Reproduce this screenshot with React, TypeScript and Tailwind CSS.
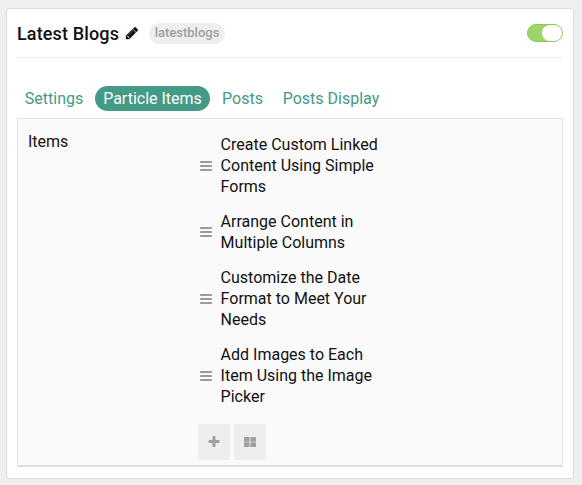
const items = [
  'Create Custom Linked Content Using Simple Forms',
  'Arrange Content in Multiple Columns',
  'Customize the Date Format to Meet Your Needs',
  'Add Images to Each Item Using the Image Picker',
];

const tabs = [
  { label: 'Settings', style: 'w-[78px] pr-1 text-[#439a86]' },
  { label: 'Particle Items', style: 'w-[115px] bg-[#439a86] text-white' },
  { label: 'Posts', style: 'w-[65px] text-[#439a86]' },
  { label: 'Posts Display', style: 'w-[112px] text-[#439a86]' },
];

function Pencil() {
  return (
    <svg viewBox="0 0 1792 1792" className="ml-[6px] size-[14px] fill-current stroke-current stroke-[50]">
      <path d="M491 1536l91-91-235-235-91 91v107h128v128h107zm523-928q0-22-22-22-10 0-17 7l-542 542q-7 7-7 17 0 22 22 22 10 0 17-7l542-542q7-7 7-17zm-54-192l416 416-832 832h-416v-416zm683 96q0 53-37 90l-166 166-416-416 166-165q36-38 90-38 53 0 91 38l235 234q37 39 37 91z" />
    </svg>
  );
}

function Bars() {
  return (
    <svg viewBox="0 0 12 10" className="h-[10px] w-3 shrink-0 fill-[#9b9b9b]">
      <rect width="12" height="2" rx="0.4" />
      <rect y="4" width="12" height="2" rx="0.4" />
      <rect y="8" width="12" height="2" rx="0.4" />
    </svg>
  );
}

export default function App() {
  return (
    <div className="h-[485px] w-[582px] bg-[#efefef] pt-2 pl-[6px] font-[Roboto,sans-serif] text-base text-[#111]">
      <div className="h-[471px] w-[568px] rounded-[3px] border border-[#dddddd] bg-white px-[10px]">
        <header className="flex h-[49px] items-center border-b border-[#ededed]">
          <h1 className="w-[102px] text-[18px] font-medium tracking-[0.14px] whitespace-nowrap">Latest Blogs</h1>
          <Pencil />
          <span className="ml-[10px] flex h-[21px] w-[76px] items-center justify-center rounded-full bg-[#eeeeee] text-[13px] font-medium text-[#a0a0a0]">
            latestblogs
          </span>
          <span className="ml-auto flex h-[18px] w-9 justify-end rounded-full border border-[#8fc65a] bg-[#9fd46a]">
            <span className="h-4 w-5 rounded-full bg-white" />
          </span>
        </header>
        <nav className="mt-7 flex h-[25px]">
          {tabs.map((tab) => (
            <button key={tab.label} className={'flex h-[25px] items-center justify-center rounded-full whitespace-nowrap ' + tab.style}>
              {tab.label}
            </button>
          ))}
        </nav>
        <section className="mt-[7px] flex h-[349px] border border-b-2 border-[#e2e2e2] border-b-[#dddddd] bg-[#fafafa]">
          <div className="w-[180px] pt-[11px] pl-[10px] leading-6">Items</div>
          <div>
            <ul className="flex w-[185px] flex-col gap-[14px] pt-[15px] leading-[21px]">
              {items.map((item) => (
                <li key={item} className="flex items-center gap-[8.6px] pl-[2px]">
                  <Bars />
                  <span className="w-[162px]">{item}</span>
                </li>
              ))}
            </ul>
            <div className="mt-[17px] flex gap-1 text-[#a0a0a0]">
              <button className="flex h-9 w-8 items-center justify-center rounded-[2px] bg-[#eeeeee]">
                <svg viewBox="0 0 1792 1792" className="size-[14px] fill-current">
                  <path d="M1600 736v192q0 40-28 68t-68 28h-416v416q0 40-28 68t-68 28h-192q-40 0-68-28t-28-68v-416h-416q-40 0-68-28t-28-68v-192q0-40 28-68t68-28h416v-416q0-40 28-68t68-28h192q40 0 68 28t28 68v416h416q40 0 68 28t28 68z" />
                </svg>
              </button>
              <button className="flex h-9 w-8 items-center justify-center rounded-[2px] bg-[#eeeeee]">
                <svg viewBox="0 0 12 10" className="h-[10px] w-3 fill-current">
                  <rect width="5.6" height="4.7" rx="0.6" />
                  <rect x="6.4" width="5.6" height="4.7" rx="0.6" />
                  <rect y="5.3" width="5.6" height="4.7" rx="0.6" />
                  <rect x="6.4" y="5.3" width="5.6" height="4.7" rx="0.6" />
                </svg>
              </button>
            </div>
          </div>
        </section>
      </div>
    </div>
  );
}
